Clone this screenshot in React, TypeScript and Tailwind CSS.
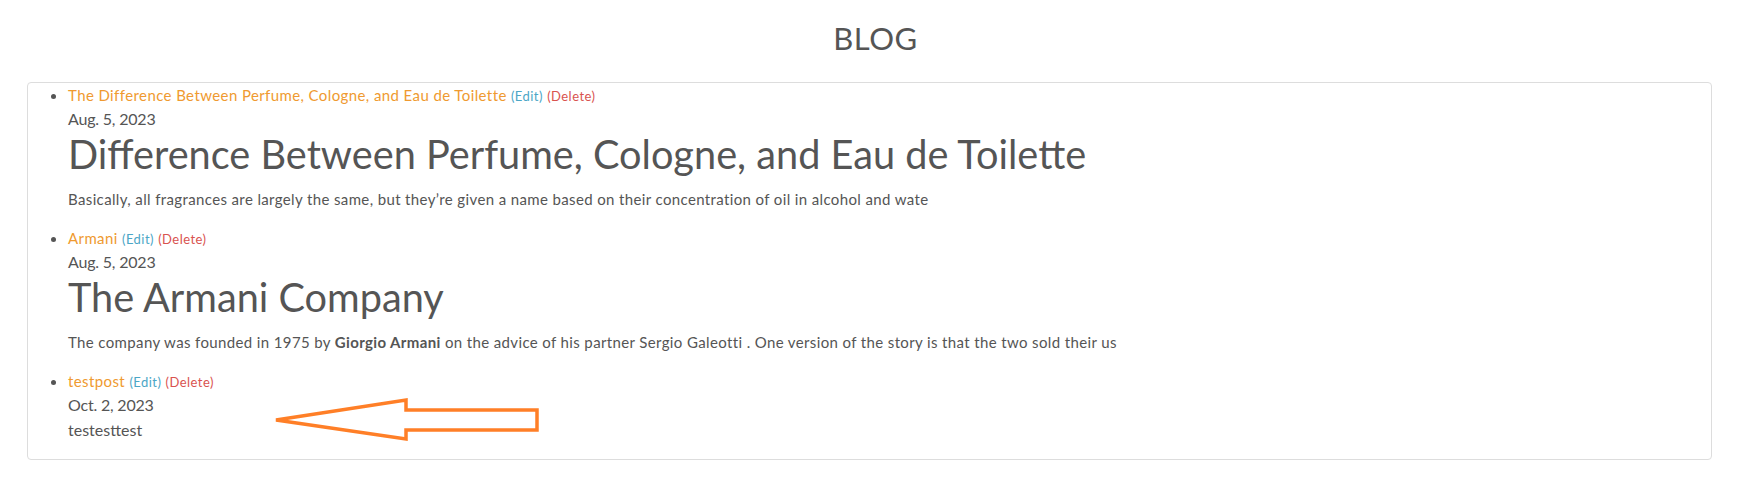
import type { ReactNode } from "react";

type Post = {
  slug: string;
  title: string;
  date: string;
  heading?: string;
  body: ReactNode;
};

const posts: Post[] = [
  {
    slug: "perfume",
    title: "The Difference Between Perfume, Cologne, and Eau de Toilette",
    date: "Aug. 5, 2023",
    heading: "Difference Between Perfume, Cologne, and Eau de Toilette",
    body: "Basically, all fragrances are largely the same, but they\u2019re given a name based on their concentration of oil in alcohol and wate",
  },
  {
    slug: "armani",
    title: "Armani",
    date: "Aug. 5, 2023",
    heading: "The Armani Company",
    body: (
      <>
        The company was founded in 1975 by <strong className="font-bold">Giorgio Armani</strong> on the advice of his
        partner Sergio Galeotti . One version of the story is that the two sold their us
      </>
    ),
  },
  {
    slug: "testpost",
    title: "testpost",
    date: "Oct. 2, 2023",
    body: "testesttest",
  },
];

function PostItem({ post, first }: { post: Post; first: boolean }) {
  return (
    <li className={first ? "" : "mt-[17px]"}>
      <div className="text-[15px] leading-[22px] tracking-[0.4px]">
        <a href="#" className="text-[#ef9a30]">
          {post.title}
        </a>{" "}
        <a href="#" className="text-[13px] leading-none tracking-[0.45px] text-[#4ba6c6]">
          (Edit)
        </a>{" "}
        <a href="#" className="text-[13px] leading-none tracking-[0.45px] text-[#d9534f]">
          (Delete)
        </a>
      </div>
      <div className="mt-px text-[16px] leading-[24px] tracking-[-0.2px]">{post.date}</div>
      {post.heading ? (
        <>
          <h1 className="mt-px text-[39.7px] leading-[43px] font-normal">{post.heading}</h1>
          <p className="mt-[14px] text-[15px] leading-[20px] tracking-[0.37px]">{post.body}</p>
        </>
      ) : (
        <div className="mt-px text-[16px] leading-[24px]">{post.body}</div>
      )}
    </li>
  );
}

function Arrow() {
  return (
    <svg className="pointer-events-none absolute left-0 top-0" width="1751" height="499">
      <polygon
        points="276,420 406,400 406,410 537,410 537,430 406,430 406,439"
        fill="none"
        stroke="#ff7f27"
        strokeWidth="3.5"
        strokeLinejoin="miter"
      />
    </svg>
  );
}

export default function App() {
  return (
    <div className="relative h-[499px] w-[1751px] overflow-hidden bg-white font-['Lato','Liberation_Sans',sans-serif] text-[#555555]">
      <h2 className="pt-[22px] text-center text-[31px] leading-[33px] tracking-[0.5px] font-normal">BLOG</h2>

      <div className="ml-[27px] mt-[27px] w-[1685px] rounded-[4px] border border-[#dddddd] pb-[17px]">
        <ul className="list-disc pl-10 marker:text-[#555555]">
          {posts.map((post, i) => (
            <PostItem key={post.slug} post={post} first={i === 0} />
          ))}
        </ul>
      </div>

      <Arrow />
    </div>
  );
}
